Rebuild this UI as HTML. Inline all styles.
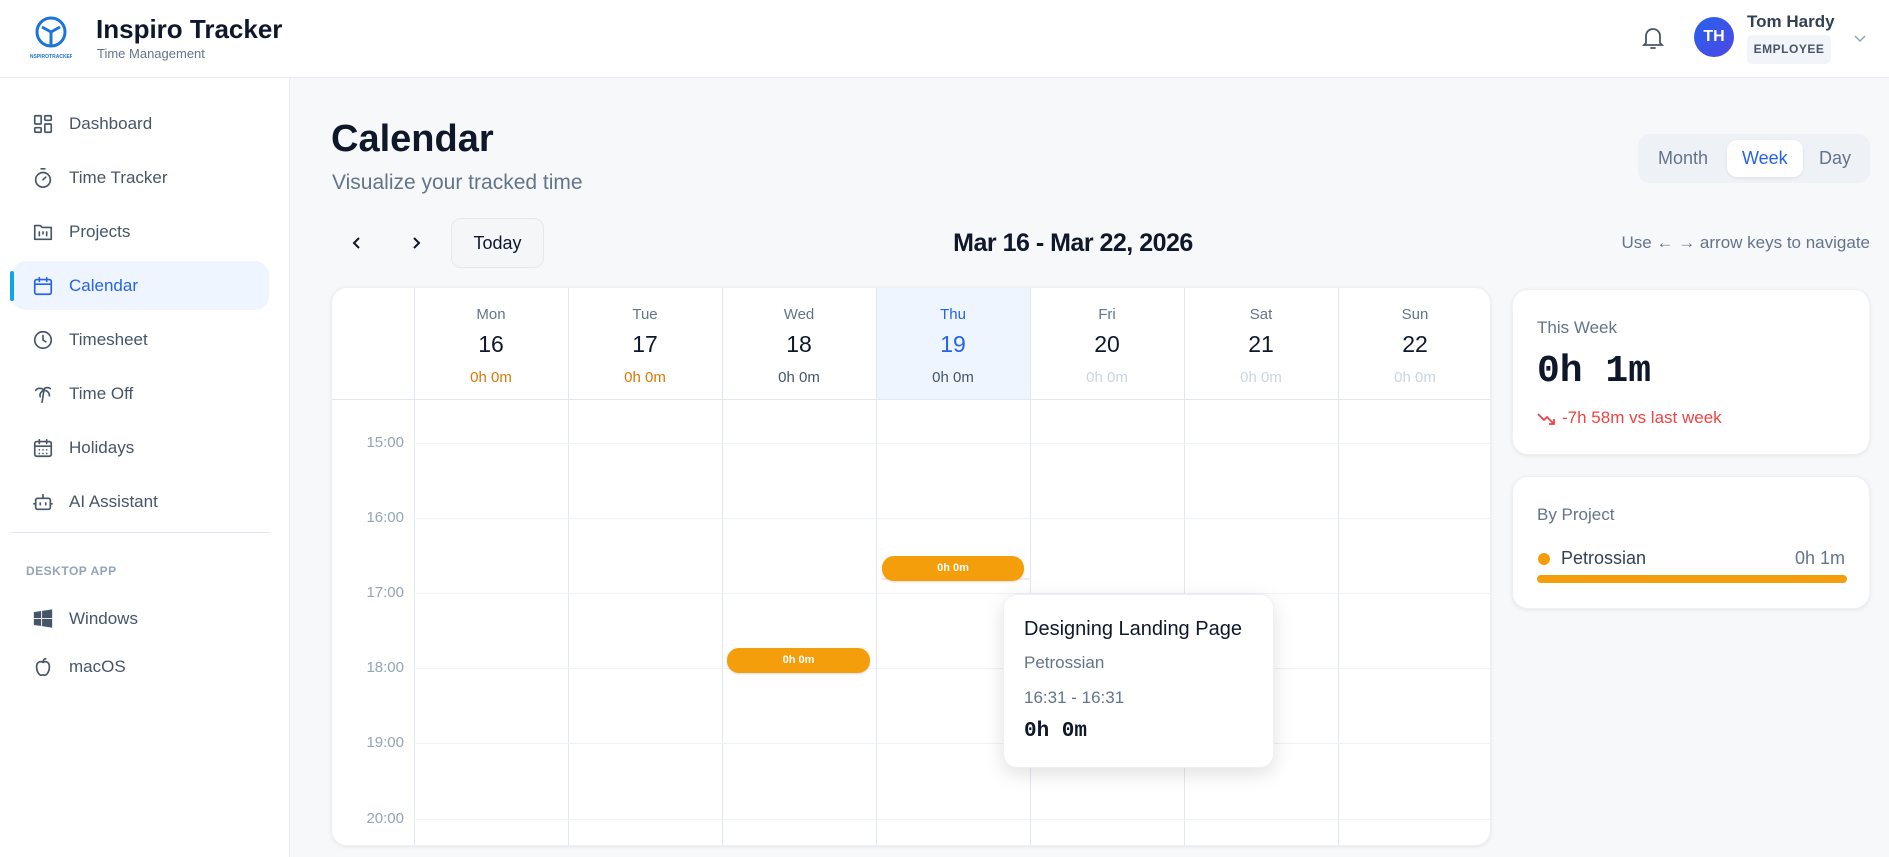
<!DOCTYPE html>
<html><head><meta charset="utf-8"><style>
*{box-sizing:border-box;margin:0;padding:0}
body{width:1889px;height:857px;overflow:hidden;background:#f7f8fa;font-family:"Liberation Sans",sans-serif;position:relative;color:#0f172a}
.a{position:absolute}
.hdr{left:0;top:0;width:1889px;height:78px;background:#fff;border-bottom:1px solid #e8ebef}
.side{left:0;top:78px;width:290px;height:779px;background:#fff;border-right:1px solid #e8ebef}
.nav{position:absolute;left:12px;width:257px;height:49px;display:flex;align-items:center;font-size:17px;color:#475569}
.nav svg{position:absolute;left:20px;width:22px;height:22px;fill:none;stroke:#475569;stroke-width:1.8;stroke-linecap:round;stroke-linejoin:round}
.nav span{position:absolute;left:57px}
.card{background:#fff;border-radius:16px;box-shadow:0 1px 4px rgba(0,0,0,.08);border:1px solid #eef0f3}
.vl{position:absolute;top:0;width:1px;background:#e2e8f0;height:558px}
.hl{position:absolute;left:82px;right:0;height:1px;background:#eef1f5}
.dh{position:absolute;top:0;width:154px;height:111px;text-align:center}
.dh .n{font-size:15px;color:#64748b;margin-top:18px}
.dh .d{font-size:23px;color:#0f172a;margin-top:8px;font-weight:500}
.dh .t{font-size:15px;margin-top:11px;color:#475569}
.tl{position:absolute;left:0;width:72px;text-align:right;font-size:15px;color:#94a3b8}
.ev{position:absolute;height:25px;border-radius:12px;background:#f59e0b;color:#fff;font-size:11px;font-weight:bold;text-align:center;line-height:25px;box-shadow:0 1px 2px rgba(0,0,0,.15)}
.mono{font-family:"Liberation Mono","DejaVu Sans Mono",monospace}
</style></head><body>
<div class="a hdr"></div>
<svg class="a" style="left:30px;top:14px" width="42" height="46" viewBox="0 0 42 46"><circle cx="21" cy="18" r="14" fill="none" stroke="#1d74d8" stroke-width="3"/><path d="M21 18 L21 32 M21 18 L12 13 M21 18 L30 13" stroke="#1d74d8" stroke-width="3"/><text x="21" y="44" font-size="5" fill="#1d74d8" text-anchor="middle" font-family="Liberation Sans" font-weight="bold">INSPIROTRACKER</text></svg>
<div class="a" style="left:96px;top:14px;font-size:26px;font-weight:bold;color:#0f172a">Inspiro Tracker</div>
<div class="a" style="left:97px;top:46px;font-size:13px;color:#64748b">Time Management</div>
<svg class="a" style="left:1641px;top:25px" width="24" height="26" viewBox="0 0 24 26" fill="none" stroke="#475569" stroke-width="1.8" stroke-linecap="round"><path d="M5 18V11a7 7 0 0114 0v7l2 2H3z"/><path d="M10 23h4"/></svg>
<div class="a" style="left:1694px;top:17px;width:40px;height:40px;border-radius:50%;background:linear-gradient(135deg,#2563eb,#4f46e5);color:#fff;font-weight:bold;font-size:16px;line-height:40px;text-align:center">TH</div>
<div class="a" style="left:1747px;top:12px;font-size:17px;font-weight:bold;color:#334155">Tom Hardy</div>
<div class="a" style="left:1747px;top:35px;width:84px;height:29px;background:#f1f5f9;border-radius:5px;font-size:12px;font-weight:bold;color:#475569;text-align:center;line-height:29px;letter-spacing:.5px">EMPLOYEE</div>
<svg class="a" style="left:1853px;top:33px" width="14" height="10" viewBox="0 0 14 10"><path d="M2 3l5 5 5-5" fill="none" stroke="#94a3b8" stroke-width="1.5"/></svg>

<div class="a side"></div>
<div class="nav" style="top:99px"><svg viewBox="0 0 24 24"><rect x="3" y="3" width="7" height="9" rx="1"/><rect x="14" y="3" width="7" height="5" rx="1"/><rect x="14" y="12" width="7" height="9" rx="1"/><rect x="3" y="16" width="7" height="5" rx="1"/></svg><span>Dashboard</span></div>
<div class="nav" style="top:153px"><svg viewBox="0 0 24 24"><circle cx="12" cy="14" r="8"/><path d="M10 2h4M12 14l3-3"/></svg><span>Time Tracker</span></div>
<div class="nav" style="top:207px"><svg viewBox="0 0 24 24"><path d="M3 5h6l2 2h10v13H3z"/><path d="M8 12v4M12 12v2M16 12v4"/></svg><span>Projects</span></div>
<div class="nav" style="top:261px;background:#eff5fe;border-radius:14px;color:#2563eb"><svg viewBox="0 0 24 24" style="stroke:#2563eb"><rect x="3" y="5" width="18" height="16" rx="2"/><path d="M3 10h18M8 3v4M16 3v4"/></svg><span>Calendar</span></div>
<div class="a" style="left:10px;top:271px;width:4px;height:30px;background:#0ea5e9;border-radius:2px"></div>
<div class="nav" style="top:315px"><svg viewBox="0 0 24 24"><circle cx="12" cy="12" r="9"/><path d="M12 7v5l3 2"/></svg><span>Timesheet</span></div>
<div class="nav" style="top:369px"><svg viewBox="0 0 24 24"><path d="M13 8c0-3 4-4 7-2M13 8c-2-3-7-3-9 0M13 8c3 0 6 2 6 6M13 8c-3 1-5 4-4 7M13 8l-2 13"/></svg><span>Time Off</span></div>
<div class="nav" style="top:423px"><svg viewBox="0 0 24 24"><rect x="3" y="5" width="18" height="16" rx="2"/><path d="M3 10h18M8 3v4M16 3v4M8 14h.01M12 14h.01M16 14h.01M8 18h.01M12 18h.01M16 18h.01"/></svg><span>Holidays</span></div>
<div class="nav" style="top:477px"><svg viewBox="0 0 24 24"><rect x="4" y="8" width="16" height="12" rx="2"/><path d="M12 8V4M2 14h2M20 14h2M9 13v2M15 13v2"/></svg><span>AI Assistant</span></div>
<div class="a" style="left:11px;top:532px;width:259px;height:1px;background:#e2e8f0"></div>
<div class="a" style="left:26px;top:564px;font-size:12px;font-weight:bold;color:#94a3b8;letter-spacing:.5px">DESKTOP APP</div>
<div class="nav" style="top:594px"><svg viewBox="0 0 24 24" style="stroke:none;fill:#475569"><path d="M2 4.5l8-1.2V11H2zM11 3.2L22 1.5V11H11zM2 12h8v7.7l-8-1.2zM11 12h11v9.5l-11-1.7z"/></svg><span>Windows</span></div>
<div class="nav" style="top:642px"><svg viewBox="0 0 24 24"><path d="M12 7c-2-1.5-7-1.5-7 5 0 5 3 9 5 9 1 0 1.5-.5 2-.5s1 .5 2 .5c2 0 5-4 5-9 0-6.5-5-6.5-7-5zM12 7c0-2 1-4 3-4"/></svg><span>macOS</span></div>

<div class="a" style="left:331px;top:118px;font-size:38px;font-weight:bold;color:#0f172a">Calendar</div>
<div class="a" style="left:332px;top:171px;font-size:21px;color:#64748b">Visualize your tracked time</div>
<div class="a" style="left:1638px;top:134px;width:232px;height:49px;background:#eef1f6;border-radius:12px"></div>
<div class="a" style="left:1727px;top:140px;width:76px;height:37px;background:#fff;border-radius:10px;box-shadow:0 1px 3px rgba(0,0,0,.08)"></div>
<div class="a" style="left:1658px;top:148px;font-size:18px;color:#64748b">Month</div>
<div class="a" style="left:1742px;top:148px;font-size:18px;color:#2563eb">Week</div>
<div class="a" style="left:1819px;top:148px;font-size:18px;color:#64748b">Day</div>

<svg class="a" style="left:350px;top:235px" width="14" height="16" viewBox="0 0 14 16"><path d="M9 3L4 8l5 5" fill="none" stroke="#0f172a" stroke-width="2"/></svg>
<svg class="a" style="left:409px;top:235px" width="14" height="16" viewBox="0 0 14 16"><path d="M5 3l5 5-5 5" fill="none" stroke="#0f172a" stroke-width="2"/></svg>
<div class="a" style="left:451px;top:218px;width:93px;height:50px;background:#f4f6f8;border:1px solid #e5e7eb;border-radius:10px;font-size:18px;line-height:48px;text-align:center;color:#0f172a">Today</div>
<div class="a" style="left:873px;top:229px;width:400px;text-align:center;font-size:25px;font-weight:bold;color:#0f172a;letter-spacing:-.5px">Mar 16 - Mar 22, 2026</div>
<div class="a" style="left:1500px;top:233px;width:370px;text-align:right;font-size:17px;color:#64748b">Use ← → arrow keys to navigate</div>

<div class="a card" style="left:331px;top:287px;width:1160px;height:559px;overflow:hidden">
 <div class="a" style="left:544px;top:0;width:154px;height:111px;background:#eef5fe"></div>
 <div class="a" style="left:0;top:111px;width:1160px;height:1px;background:#e2e8f0"></div>
 <div class="vl" style="left:82px"></div><div class="vl" style="left:236px"></div><div class="vl" style="left:390px"></div><div class="vl" style="left:544px"></div><div class="vl" style="left:698px"></div><div class="vl" style="left:852px"></div><div class="vl" style="left:1006px"></div>
 <div class="dh" style="left:82px"><div class="n">Mon</div><div class="d">16</div><div class="t" style="color:#d97706">0h 0m</div></div>
 <div class="dh" style="left:236px"><div class="n">Tue</div><div class="d">17</div><div class="t" style="color:#d97706">0h 0m</div></div>
 <div class="dh" style="left:390px"><div class="n">Wed</div><div class="d">18</div><div class="t">0h 0m</div></div>
 <div class="dh" style="left:544px"><div class="n" style="color:#2563eb">Thu</div><div class="d" style="color:#2563eb">19</div><div class="t">0h 0m</div></div>
 <div class="dh" style="left:698px"><div class="n">Fri</div><div class="d">20</div><div class="t" style="color:#cbd5e1">0h 0m</div></div>
 <div class="dh" style="left:852px"><div class="n">Sat</div><div class="d">21</div><div class="t" style="color:#cbd5e1">0h 0m</div></div>
 <div class="dh" style="left:1006px"><div class="n">Sun</div><div class="d">22</div><div class="t" style="color:#cbd5e1">0h 0m</div></div>
 <div class="hl" style="top:155px"></div><div class="hl" style="top:230px"></div><div class="hl" style="top:305px"></div><div class="hl" style="top:380px"></div><div class="hl" style="top:455px"></div><div class="hl" style="top:531px"></div>
 <div class="tl" style="top:146px">15:00</div><div class="tl" style="top:221px">16:00</div><div class="tl" style="top:296px">17:00</div><div class="tl" style="top:371px">18:00</div><div class="tl" style="top:446px">19:00</div><div class="tl" style="top:522px">20:00</div>
 <div class="a" style="left:549px;top:290px;width:150px;height:2px;background:#fde8e8"></div>
 <div class="ev" style="left:550px;top:268px;width:142px">0h 0m</div>
 <div class="ev" style="left:395px;top:360px;width:143px">0h 0m</div>
</div>

<div class="a card" style="left:1003px;top:594px;width:271px;height:174px;border-radius:14px;box-shadow:0 6px 20px rgba(0,0,0,.12)">
 <div class="a" style="left:20px;top:23px;font-size:20px;color:#0f172a">Designing Landing Page</div>
 <div class="a" style="left:20px;top:58px;font-size:17px;color:#64748b">Petrossian</div>
 <div class="a" style="left:20px;top:93px;font-size:17px;color:#64748b">16:31 - 16:31</div>
 <div class="a mono" style="left:20px;top:125px;font-size:21px;font-weight:bold;color:#0f172a">0h 0m</div>
</div>

<div class="a card" style="left:1512px;top:289px;width:358px;height:166px">
 <div class="a" style="left:24px;top:28px;font-size:17px;color:#64748b">This Week</div>
 <div class="a mono" style="left:24px;top:60px;font-size:38px;font-weight:bold;color:#0f172a">0h 1m</div>
 <svg class="a" style="left:24px;top:120px" width="20" height="16" viewBox="0 0 20 16"><path d="M1 4l6 6 3-3 7 7M17 9v5h-5" fill="none" stroke="#ef4444" stroke-width="1.8"/></svg>
 <div class="a" style="left:49px;top:118px;font-size:17px;color:#ef4444">-7h 58m vs last week</div>
</div>
<div class="a card" style="left:1512px;top:476px;width:358px;height:133px">
 <div class="a" style="left:24px;top:28px;font-size:17px;color:#64748b">By Project</div>
 <div class="a" style="left:25px;top:76px;width:12px;height:12px;border-radius:50%;background:#f59e0b"></div>
 <div class="a" style="left:48px;top:71px;font-size:18px;color:#334155">Petrossian</div>
 <div class="a" style="right:24px;top:71px;font-size:18px;color:#64748b">0h 1m</div>
 <div class="a" style="left:24px;top:98px;width:310px;height:8px;border-radius:4px;background:#f59e0b"></div>
</div>
</body></html>
